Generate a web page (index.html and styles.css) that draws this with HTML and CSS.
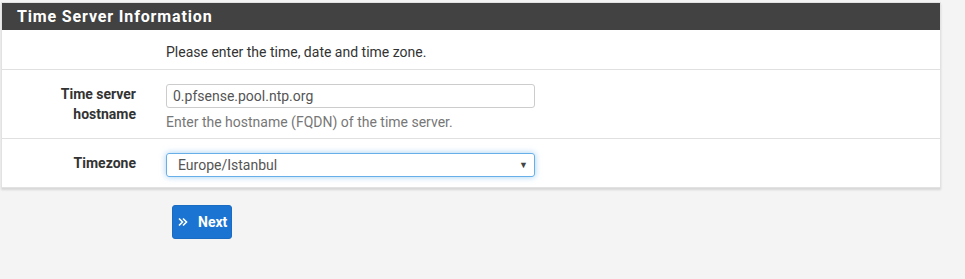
FILE: index.html
```html
<!DOCTYPE html>
<html lang="en">

<head>
    <meta charset="UTF-8">
    <meta name="viewport" content="width=device-width, initial-scale=1.0">
    <title>Time Server Information</title>
    <link rel="stylesheet" href="styles.css">
</head>

<body>
    <div class="page">
        <div class="panel">
            <div class="panel-heading">
                <h2 class="panel-title">Time Server Information</h2>
            </div>
            <div class="panel-body">
                <div class="form-row intro">
                    <div class="form-label"></div>
                    <div class="form-field">Please enter the time, date and time zone.</div>
                </div>

                <div class="form-row">
                    <label class="form-label" for="timeserver">Time server<br>hostname</label>
                    <div class="form-field">
                        <input type="text" id="timeserver" class="form-control" value="0.pfsense.pool.ntp.org">
                        <span class="help-block">Enter the hostname (FQDN) of the time server.</span>
                    </div>
                </div>

                <div class="form-row">
                    <label class="form-label" for="timezone">Timezone</label>
                    <div class="form-field">
                        <div class="select focused" id="timezone">
                            <span>Europe/Istanbul</span>
                            <span class="caret">&#9660;</span>
                        </div>
                    </div>
                </div>
            </div>
        </div>

        <div class="actions">
            <button class="btn-primary">
                <svg width="10" height="10" viewBox="0 0 10 10">
                    <path d="M1 1.5 L4.5 5 L1 8.5 M5 1.5 L8.5 5 L5 8.5" fill="none" stroke="#fff" stroke-width="1.6"/>
                </svg>
                Next
            </button>
        </div>
    </div>
</body>

</html>
```

FILE: styles.css
```css
body {
    margin: 0;
    background-color: #f4f4f4;
    font-family: Roboto, "Liberation Sans", sans-serif;
    font-size: 14px;
    color: #333;
}

.page {
    padding: 2px 0 0 1px;
}

/* Painel */
.panel {
    width: 938px;
    background-color: #fff;
    border: 1px solid #e2e2e2;
    box-shadow: 0 2px 2px rgba(0, 0, 0, 0.12);
}

.panel-heading {
    background-color: #424242;
    height: 27px;
    display: flex;
    align-items: center;
    padding-left: 15px;
}

.panel-title {
    margin: 0;
    color: #fff;
    font-size: 16px;
    font-weight: bold;
    letter-spacing: 0.85px;
}

.form-row {
    display: grid;
    grid-template-columns: 134px 1fr;
    column-gap: 30px;
    border-top: 1px solid #e0e0e0;
    padding: 14px 0 8px;
}

.form-row:first-child {
    border-top: none;
}

.intro {
    padding: 12px 0 7px;
    line-height: 20px;
}

.form-label {
    text-align: right;
    font-weight: bold;
    line-height: 20px;
}

.form-control {
    display: block;
    box-sizing: border-box;
    width: 369px;
    height: 24px;
    padding: 0 6px;
    border: 1px solid #ccc;
    border-radius: 3px;
    font-family: inherit;
    font-size: 14px;
    color: #555;
}

.help-block {
    display: block;
    margin-top: 6px;
    color: #777;
    line-height: 16px;
}

.select {
    box-sizing: border-box;
    width: 369px;
    height: 24px;
    padding: 0 6px 0 11px;
    border: 1px solid #ccc;
    border-radius: 3px;
    display: flex;
    align-items: center;
    justify-content: space-between;
    color: #555;
}

.select.focused {
    border-color: #66afe9;
    box-shadow: 0 0 6px rgba(102, 175, 233, 0.6);
}

.caret {
    font-size: 9px;
    color: #444;
}

.form-row:last-child {
    padding: 14px 0 10px;
}

/* Botão */
.actions {
    padding: 17px 0 0 171px;
}

.btn-primary {
    display: flex;
    align-items: center;
    gap: 10px;
    height: 34px;
    padding: 0 4px 0 5px;
    background-color: #1b74d1;
    color: #fff;
    border: 1px solid #1a6cc2;
    border-radius: 3px;
    font-family: inherit;
    font-size: 14px;
    font-weight: bold;
}
```
